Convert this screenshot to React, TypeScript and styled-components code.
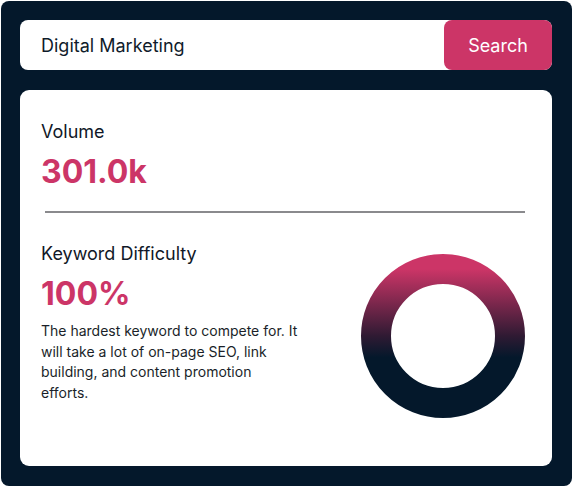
import React from "react";
import styled, { createGlobalStyle } from "styled-components";

const GlobalStyle = createGlobalStyle`
  html, body {
    margin: 0;
    padding: 0;
    background: #ffffff;
    font-family: Inter, "Noto Sans", Arial, sans-serif;
  }
`;

// Dark outer frame around the whole widget.
const Frame = styled.div`
  box-sizing: border-box;
  margin: 1px;
  width: 571px;
  height: 485px;
  background: #04182b;
  border-radius: 8px;
  padding: 19px 20px 20px 19px;
  display: flex;
  flex-direction: column;
  gap: 20px;
`;

// Search bar: input area and the pink button.
const SearchBar = styled.div`
  display: flex;
  height: 50px;
  background: #ffffff;
  border-radius: 8px;
`;

const SearchInput = styled.div`
  flex: 1;
  display: flex;
  align-items: center;
  padding-left: 21px;
  font-size: 18px;
  color: #0f1b2a;
`;

const SearchButton = styled.button`
  width: 108px;
  border: none;
  border-radius: 8px;
  background: #cc3567;
  color: #ffffff;
  font-family: inherit;
  font-size: 18px;
`;

// The white card holding the metrics.
const Card = styled.div`
  flex: 1;
  background: #ffffff;
  border-radius: 9px;
  padding: 30px 21px 0 21px;
`;

const Label = styled.div`
  font-size: 18px;
  color: #111827;
  line-height: 24px;
`;

const BigValue = styled.div`
  font-size: 32px;
  font-weight: 700;
  color: #cc3567;
  line-height: 40px;
  margin-top: 8px;
`;

const Divider = styled.hr`
  border: none;
  height: 2px;
  background: #8a8a8d;
  margin: 19px 6px 0 4px;
`;

const DifficultyRow = styled.div`
  display: flex;
  justify-content: space-between;
  margin-top: 29px;
`;

const TextColumn = styled.div`
  width: 258px;
`;

const Description = styled.p`
  margin: 7px 0 0 0;
  font-size: 14px;
  line-height: 20.7px;
  color: #1a1f29;
`;

const DonutWrap = styled.div`
  margin-top: 12px;
  margin-right: 6px;
  width: 164px;
  height: 164px;
`;

const Donut: React.FC = () => (
  <DonutWrap>
    <svg width="164" height="164" viewBox="0 0 164 164">
      <defs>
        <linearGradient id="ring" x1="0" y1="0" x2="0" y2="1">
          <stop offset="0" stopColor="#cc3567" />
          <stop offset="0.5" stopColor="#2f1a33" />
          <stop offset="0.66" stopColor="#04182b" />
          <stop offset="1" stopColor="#04182b" />
        </linearGradient>
      </defs>
      <circle cx="82" cy="82" r="67" fill="none" stroke="url(#ring)" strokeWidth="30" />
    </svg>
  </DonutWrap>
);

export default function App() {
  return (
    <>
      <GlobalStyle />
      <Frame>
        <SearchBar>
          <SearchInput>Digital Marketing</SearchInput>
          <SearchButton>Search</SearchButton>
        </SearchBar>
        <Card>
          <Label>Volume</Label>
          <BigValue>301.0k</BigValue>
          <Divider />
          <DifficultyRow>
            <TextColumn>
              <Label>Keyword Difficulty</Label>
              <BigValue>100%</BigValue>
              <Description>
                The hardest keyword to compete for. It will take a lot of on-page SEO, link
                building, and content promotion efforts.
              </Description>
            </TextColumn>
            <Donut />
          </DifficultyRow>
        </Card>
      </Frame>
    </>
  );
}
